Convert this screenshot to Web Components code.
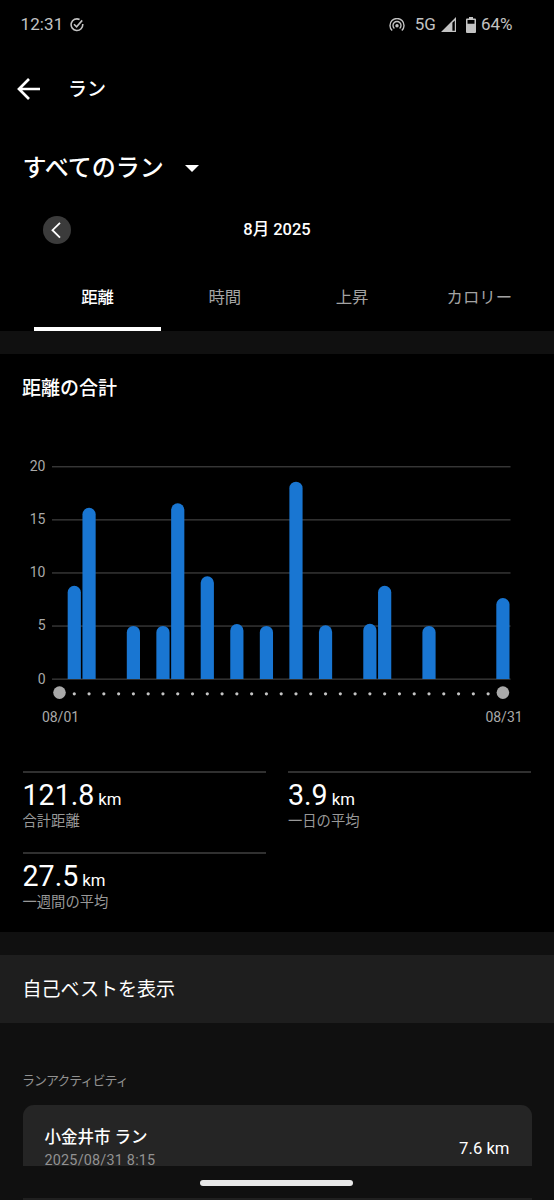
<!DOCTYPE html>
<html lang="ja">
<head>
<meta charset="utf-8">
<title>ラン</title>
<style>
  html, body {
    margin: 0;
    background: #101010;
  }
  body {
    width: 554px;
    height: 1200px;
    overflow: hidden;
    font-family: Roboto, "Noto Sans CJK JP", sans-serif;
    color: #fff;
  }
</style>
</head>
<body>
<run-report></run-report>

<script>
class StatusBar extends HTMLElement {
  constructor() {
    super();
    this.attachShadow({ mode: 'open' });
    this.shadowRoot.innerHTML = `
      <style>
        :host {
          display: flex;
          align-items: center;
          justify-content: space-between;
          box-sizing: border-box;
          height: 49px;
          padding: 0 41.5px 0 20.5px;
          font-size: 17px;
          line-height: 20px;
          color: #c3c3c3;
        }
        .group { display: flex; align-items: center; }
        .group span { margin-top: -1px; }
        .time { margin-right: 7px; letter-spacing: 0.1px; }
        .hotspot { margin-right: 10px; }
        .signal { margin: 0 10px 0 5px; }
        .battery { margin-right: 5px; }
        svg { display: block; }
      </style>
      <div class="group">
        <span class="time">12:31</span>
        <svg width="14" height="14" viewBox="0 0 14 14" fill="none" stroke="currentColor" stroke-width="1.6">
          <path d="M9.6 1.5A5.8 5.8 0 1 0 12.7 6"/>
          <path d="M4 6.2L6.6 8.8L12.2 2.4"/>
        </svg>
      </div>
      <div class="group">
        <svg class="hotspot" width="16" height="14" viewBox="0 0 16 14" fill="none" stroke="currentColor" stroke-width="1.4">
          <path d="M3.2 12.6A7 7 0 1 1 12.8 12.6"/>
          <path d="M5.4 10.5A4 4 0 1 1 10.6 10.5"/>
          <circle cx="8" cy="7.7" r="1.7" fill="currentColor" stroke="none"/>
        </svg>
        <span>5G</span>
        <svg class="signal" width="15" height="15" viewBox="0 0 15 15" fill="currentColor">
          <path fill-rule="evenodd" d="M15 0V15H0ZM13.8 3.4L11.4 5.8V13.7H13.8Z"/>
        </svg>
        <svg class="battery" width="10" height="16" viewBox="0 0 10 16" fill="currentColor">
          <path fill-rule="evenodd" d="M3 0H7V1.6H9Q10 1.6 10 2.6V15Q10 16 9 16H1Q0 16 0 15V2.6Q0 1.6 1 1.6H3ZM1.5 3.1V6.8H8.5V3.1Z"/>
        </svg>
        <span>64%</span>
      </div>
    `;
  }
}

class AppBar extends HTMLElement {
  constructor() {
    super();
    this.attachShadow({ mode: 'open' });
    this.shadowRoot.innerHTML = `
      <style>
        :host {
          display: flex;
          align-items: center;
          height: 78px;
          padding-left: 17px;
          font-size: 19px;
          line-height: 28px;
          font-weight: 500;
        }
        svg { display: block; margin: 1px 28px 0 0; }
        .title { padding-top: 3px; }
      </style>
      <svg width="23" height="22" viewBox="0 0 23 22" fill="none" stroke="currentColor" stroke-width="2.7">
        <path d="M12 1L2 11L12 21M2 11H23"/>
      </svg>
      <div class="title"><slot></slot></div>
    `;
  }
}

class FilterSelect extends HTMLElement {
  constructor() {
    super();
    this.attachShadow({ mode: 'open' });
    this.shadowRoot.innerHTML = `
      <style>
        :host {
          display: flex;
          align-items: center;
          height: 79px;
          padding-left: 22.5px;
          font-size: 24px;
          line-height: 34px;
          font-weight: 500;
        }
        svg { display: block; margin: 4px 0 0 21.5px; }
        .label { padding-top: 2px; }
      </style>
      <div class="label"><slot></slot></div>
      <svg width="14" height="7" viewBox="0 0 14 7" fill="currentColor"><path d="M0 0H14L7 7Z"/></svg>
    `;
  }
}

class MonthPicker extends HTMLElement {
  constructor() {
    super();
    this.attachShadow({ mode: 'open' });
    this.shadowRoot.innerHTML = `
      <style>
        :host {
          display: grid;
          grid-template-columns: 28px 1fr 28px;
          align-items: center;
          height: 48px;
          padding: 0 43px;
          font-size: 16.5px;
          line-height: 24px;
          font-weight: 500;
          text-align: center;
        }
        .prev {
          width: 28px;
          height: 28px;
          border-radius: 50%;
          background: #3b3b3b;
        }
        svg { display: block; }
      </style>
      <div class="prev">
        <svg width="28" height="28" viewBox="0 0 28 28" fill="none" stroke="#fff" stroke-width="1.8">
          <path d="M17 6.8L9.5 14.2L17 21.7"/>
        </svg>
      </div>
      <slot></slot>
    `;
  }
}

class TabBar extends HTMLElement {
  constructor() {
    super();
    this.attachShadow({ mode: 'open' });
    this.shadowRoot.innerHTML = `
      <style>
        :host {
          display: grid;
          grid-template-columns: repeat(4, 1fr);
          height: 77px;
          padding: 0 11px 0 34px;
        }
      </style>
      <slot></slot>
    `;
  }
}

class TabItem extends HTMLElement {
  constructor() {
    super();
    this.attachShadow({ mode: 'open' });
    this.shadowRoot.innerHTML = `
      <style>
        :host {
          display: block;
          box-sizing: border-box;
          padding-top: 32px;
          font-size: 16.4px;
          line-height: 24px;
          text-align: center;
          color: #a3a3a3;
          border-bottom: 4px solid transparent;
        }
        :host([selected]) {
          color: #fff;
          font-weight: 500;
          border-color: #fff;
        }
      </style>
      <slot></slot>
    `;
  }
}

class DistanceChart extends HTMLElement {
  constructor() {
    super();
    this.attachShadow({ mode: 'open' });
    this.shadowRoot.innerHTML = `
      <style>
        :host { display: block; height: 310px; color: #a9a9a9; font-size: 14px; }
        svg { display: block; }
        text { fill: currentColor; }
      </style>
      <svg width="554" height="310" viewBox="0 0 554 310"></svg>
    `;
  }

  connectedCallback() {
    const values = JSON.parse(this.getAttribute('values'));
    const days = Number(this.getAttribute('days'));
    const baseline = 259;
    const unit = 10.62;
    const firstX = 59.5;
    const step = 14.78;
    const barWidth = 13.2;
    let out = '';

    for (let v = 0; v <= 20; v += 5) {
      const y = baseline - v * unit;
      out += `<rect x="52" y="${y - 0.5}" width="458.5" height="1.3" fill="#3c3c3c"/>`;
      out += `<text x="45.5" y="${y + 4.5}" text-anchor="end">${v}</text>`;
    }

    for (const [day, km] of Object.entries(values)) {
      const x = firstX + (day - 1) * step - barWidth / 2;
      const top = baseline - km * unit;
      const r = barWidth / 2;
      out += `<path fill="#1976d2" d="M${x} ${baseline}V${top + r}a${r} ${r} 0 0 1 ${barWidth} 0V${baseline}Z"/>`;
    }

    for (let d = 1; d <= days; d++) {
      const edge = d === 1 || d === days;
      out += `<circle cx="${firstX + (d - 1) * step}" cy="${edge ? 272.6 : 273.8}" r="${edge ? 6.3 : 1.6}" fill="${edge ? '#a9a9a9' : '#c4c4c4'}"/>`;
    }

    out += `<text x="60.5" y="301.5" text-anchor="middle">${this.getAttribute('from')}</text>`;
    out += `<text x="504" y="301.5" text-anchor="middle">${this.getAttribute('to')}</text>`;
    this.shadowRoot.querySelector('svg').innerHTML = out;
  }
}

class StatItem extends HTMLElement {
  constructor() {
    super();
    this.attachShadow({ mode: 'open' });
    this.shadowRoot.innerHTML = `
      <style>
        :host {
          display: block;
          box-sizing: border-box;
          height: 81px;
          border-top: 2px solid #303030;
        }
        .value {
          padding-top: 5px;
          font-size: 28.6px;
          line-height: 34px;
          height: 34px;
        }
        .unit { font-size: 16.8px; margin-left: 4px; }
        .label {
          font-size: 14.3px;
          line-height: 18px;
          color: #999;
        }
      </style>
      <div class="value"><slot></slot><span class="unit">km</span></div>
      <div class="label"></div>
    `;
    this.shadowRoot.querySelector('.label').textContent = this.getAttribute('label');
  }
}

class ActivityCard extends HTMLElement {
  constructor() {
    super();
    this.attachShadow({ mode: 'open' });
    this.shadowRoot.innerHTML = `
      <style>
        :host {
          display: flex;
          align-items: center;
          justify-content: space-between;
          box-sizing: border-box;
          height: 86px;
          padding: 0 22px;
          border-radius: 11px;
          background: #252525;
        }
        .info { display: grid; row-gap: 5px; padding-bottom: 3px; }
        .name { font-size: 16.5px; line-height: 24px; font-weight: 500; }
        .date { font-size: 14.4px; line-height: 12px; color: #929292; letter-spacing: 0.2px; }
        .distance { font-size: 16.7px; }
      </style>
      <div class="info">
        <div class="name"><slot name="name"></slot></div>
        <div class="date"><slot name="date"></slot></div>
      </div>
      <div class="distance"><slot name="distance"></slot></div>
    `;
  }
}

class HomeIndicator extends HTMLElement {
  constructor() {
    super();
    this.attachShadow({ mode: 'open' });
    this.shadowRoot.innerHTML = `
      <style>
        :host { display: flex; justify-content: center; height: 32px; padding: 14px 1px 0 0; box-sizing: border-box; }
        .pill { width: 153px; height: 6px; border-radius: 3px; background: #e8e8e8; }
      </style>
      <div class="pill"></div>
    `;
  }
}

class RunReport extends HTMLElement {
  constructor() {
    super();
    this.attachShadow({ mode: 'open' });
    this.shadowRoot.innerHTML = `
      <style>
        :host { display: block; height: 1200px; overflow: hidden; }
        header { background: #000; }
        .totals { background: #000; margin-top: 23px; height: 578px; }
        h2 {
          margin: 0;
          height: 66px;
          padding: 0 22px;
          font-size: 19px;
          line-height: 69px;
          font-weight: 500;
        }
        .stats {
          display: grid;
          grid-template-columns: 243px 243px;
          column-gap: 22.5px;
          padding: 41px 22.5px 0;
        }
        .best {
          margin-top: 23px;
          height: 68px;
          padding-left: 22.5px;
          background: #1e1e1e;
          font-size: 19px;
          line-height: 69px;
        }
        .list-title {
          height: 82px;
          padding-left: 22px;
          font-size: 13px;
          line-height: 115px;
          letter-spacing: -1px;
          color: #929292;
        }
        .list { height: 61px; padding: 0 22.5px; overflow: hidden; }
        .next { height: 2px; margin: 0 22.5px; background: #202020; }
      </style>
      <header>
        <status-bar></status-bar>
        <app-bar>ラン</app-bar>
        <filter-select>すべてのラン</filter-select>
        <month-picker>8月 2025</month-picker>
        <tab-bar>
          <tab-item selected>距離</tab-item>
          <tab-item>時間</tab-item>
          <tab-item>上昇</tab-item>
          <tab-item>カロリー</tab-item>
        </tab-bar>
      </header>
      <section class="totals">
        <h2>距離の合計</h2>
        <distance-chart days="31" from="08/01" to="08/31"
          values='{"2":8.78,"3":16.13,"6":5,"8":5,"9":16.55,"11":9.68,"13":5.17,"15":5,"17":18.58,"19":5.05,"22":5.2,"23":8.78,"26":5,"31":7.63}'></distance-chart>
        <div class="stats">
          <stat-item label="合計距離">121.8</stat-item>
          <stat-item label="一日の平均">3.9</stat-item>
          <stat-item label="一週間の平均">27.5</stat-item>
        </div>
      </section>
      <div class="best">自己ベストを表示</div>
      <div class="list-title">ランアクティビティ</div>
      <div class="list">
        <activity-card>
          <span slot="name">小金井市 ラン</span>
          <span slot="date">2025/08/31 8:15</span>
          <span slot="distance">7.6 km</span>
        </activity-card>
      </div>
      <home-indicator></home-indicator>
      <div class="next"></div>
    `;
  }
}

customElements.define('status-bar', StatusBar);
customElements.define('app-bar', AppBar);
customElements.define('filter-select', FilterSelect);
customElements.define('month-picker', MonthPicker);
customElements.define('tab-bar', TabBar);
customElements.define('tab-item', TabItem);
customElements.define('distance-chart', DistanceChart);
customElements.define('stat-item', StatItem);
customElements.define('activity-card', ActivityCard);
customElements.define('home-indicator', HomeIndicator);
customElements.define('run-report', RunReport);
</script>
</body>
</html>
